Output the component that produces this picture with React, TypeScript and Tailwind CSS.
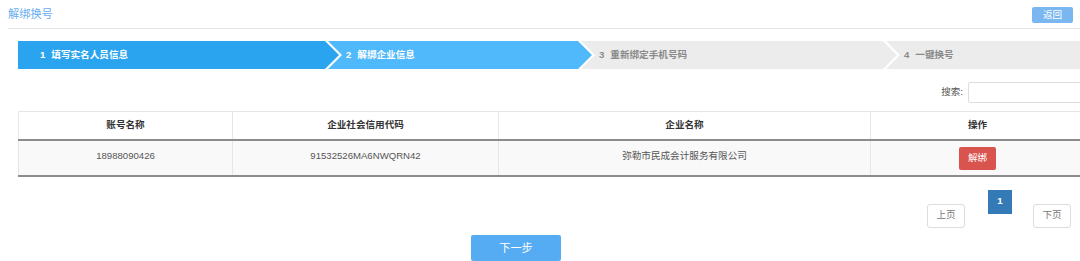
const steps = [
  { n: 1, label: "填写实名人员信息", w: "w-[321px]", bg: "bg-[#2ba4ef]", fg: "text-white", first: true },
  { n: 2, label: "解绑企业信息", w: "w-[264px]", bg: "bg-[#4fb9fb]", fg: "text-white", first: false },
  { n: 3, label: "重新绑定手机号码", w: "w-[316px]", bg: "bg-[#ececec]", fg: "text-[#8a8a8a]", first: false },
  { n: 4, label: "一键换号", w: "w-[230px]", bg: "bg-[#ececec]", fg: "text-[#8a8a8a]", first: false },
];

function StepBar() {
  return (
    <div className="flex h-[28px] ml-[18px]">
      {steps.map((s) => (
        <div
          key={s.n}
          className={`${s.w} ${s.bg} ${s.fg} shrink-0 h-full flex items-center text-[9.6px] font-bold ${
            s.first
              ? "pl-[22px] [clip-path:polygon(0_0,calc(100%_-_14px)_0,100%_50%,calc(100%_-_14px)_100%,0_100%)]"
              : "-ml-[11px] pl-[18px] [clip-path:polygon(0_0,calc(100%_-_14px)_0,100%_50%,calc(100%_-_14px)_100%,0_100%,14px_50%)]"
          }`}
        >
          <span className="mr-[6px]">{s.n}</span>
          {s.label}
        </div>
      ))}
    </div>
  );
}

export default function App() {
  return (
    <div
      className="w-[1080px] h-[261px] overflow-hidden bg-white text-[#333]"
      style={{ fontFamily: '"Liberation Sans", "Noto Sans CJK SC", sans-serif' }}
    >
      <div className="w-[1100px]">
        {/* title */}
        <div className="ml-2 h-[29px] flex items-start justify-between border-b border-[#e3e3e3]">
          <h1 className="mt-[5px] text-[11.2px] leading-[18px] text-[#67adf0]">解绑换号</h1>
          <button className="mt-[7px] mr-[27px] w-[41px] h-[16px] rounded-[2px] bg-[#7ab7f0] text-white text-[9.6px] leading-[16px]">
            返回
          </button>
        </div>

        <div className="mt-[12px]">
          <StepBar />
        </div>

        <div className="ml-[18px] w-[1067px]">
          {/* search */}
          <div className="mt-[13px] flex items-center justify-end">
            <span className="text-[9.6px] text-[#555] mr-[5px]">搜索:</span>
            <input className="w-[117px] h-[21px] border border-[#dddddd] rounded-[2px] outline-none" />
          </div>

          {/* table */}
          <table className="mt-[8px] w-full border-collapse text-[9.6px] table-fixed">
            <colgroup>
              <col className="w-[214px]" />
              <col className="w-[266px]" />
              <col className="w-[372px]" />
              <col />
            </colgroup>
            <thead>
              <tr className="h-[28px]">
                {["账号名称", "企业社会信用代码", "企业名称", "操作"].map((h) => (
                  <th
                    key={h}
                    className="font-bold text-[#333] border border-[#e6e6e6] border-b-[#8c8c8c] border-b-2"
                  >
                    {h}
                  </th>
                ))}
              </tr>
            </thead>
            <tbody>
              <tr className="h-[34px] bg-[#f9f9f9] text-[#555]">
                <td className="align-top pt-[8px] text-center border-x border-[#e6e6e6] border-b-2 border-b-[#8c8c8c]">
                  18988090426
                </td>
                <td className="align-top pt-[8px] text-center border-x border-[#e6e6e6] border-b-2 border-b-[#8c8c8c]">
                  91532526MA6NWQRN42
                </td>
                <td className="align-top pt-[8px] text-center border-x border-[#e6e6e6] border-b-2 border-b-[#8c8c8c]">
                  弥勒市民成会计服务有限公司
                </td>
                <td className="align-top pt-[6px] pb-[5px] text-center border-x border-[#e6e6e6] border-b-2 border-b-[#8c8c8c]">
                  <button className="w-[37px] h-[23px] rounded-[2px] bg-[#d9534f] text-white text-[9.6px] align-top">
                    解绑
                  </button>
                </td>
              </tr>
            </tbody>
          </table>

          {/* pagination */}
          <div className="mt-[13px] mr-[14px] flex justify-end items-start text-[9.6px]">
            <button className="mt-[14px] w-[38px] h-[24px] border border-[#dddddd] rounded-[3px] text-[#777] bg-white">
              上页
            </button>
            <button className="ml-[23px] w-[24px] h-[24px] bg-[#337ab7] text-white font-bold">1</button>
            <button className="ml-[21px] mt-[14px] w-[38px] h-[24px] border border-[#dddddd] rounded-[3px] text-[#777] bg-white">
              下页
            </button>
          </div>

          {/* next */}
          <div className="mt-[7px] ml-[453px]">
            <button className="w-[90px] h-[26px] rounded-[2px] bg-[#55acf2] text-white text-[11.2px]">
              下一步
            </button>
          </div>
        </div>
      </div>
    </div>
  );
}
